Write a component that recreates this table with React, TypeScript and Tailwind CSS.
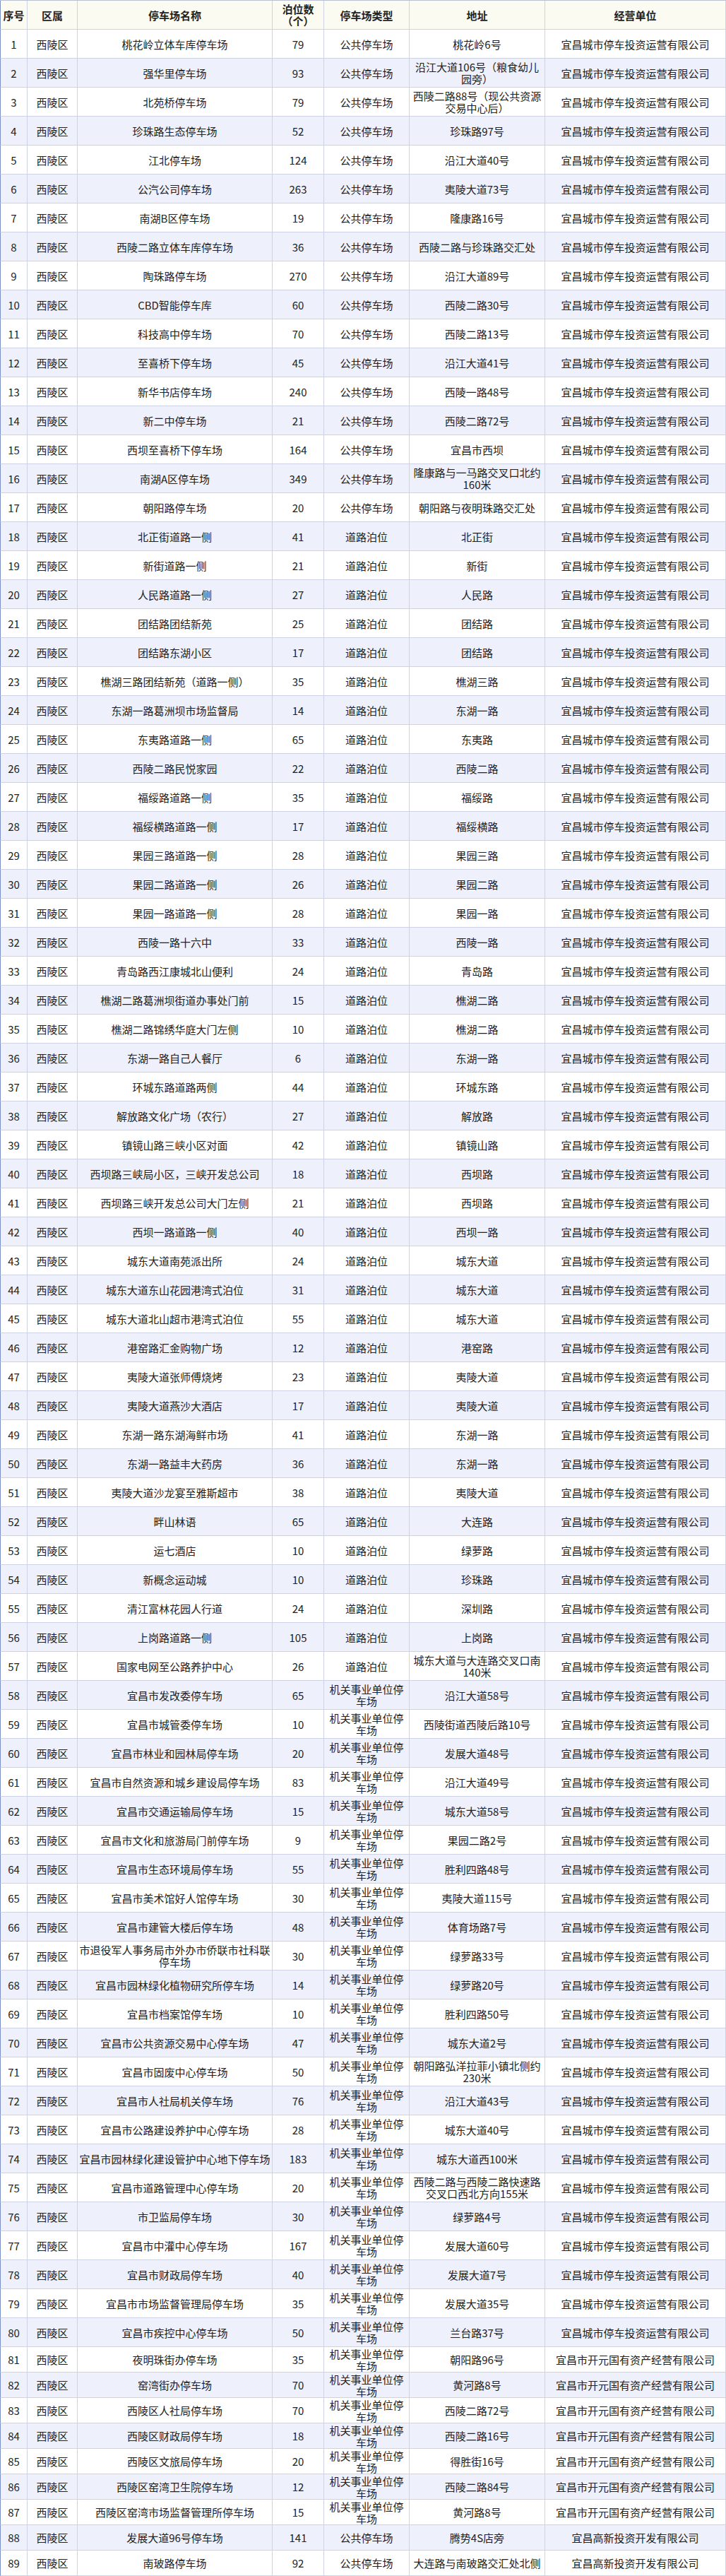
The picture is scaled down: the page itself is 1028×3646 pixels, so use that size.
import React from "react";

const P = "公共停车场";
const R = "道路泊位";
const J = "机关事业单位停车场";
const C1 = "宜昌城市停车投资运营有限公司";
const C2 = "宜昌市开元国有资产经营有限公司";
const C3 = "宜昌高新投资开发有限公司";

type Row = [string, string, string, string, string];

const rows: Row[] = [
  ["桃花岭立体车库停车场", "79", P, "桃花岭6号", C1],
  ["强华里停车场", "93", P, "沿江大道106号（粮食幼儿园旁）", C1],
  ["北苑桥停车场", "79", P, "西陵二路88号（现公共资源交易中心后）", C1],
  ["珍珠路生态停车场", "52", P, "珍珠路97号", C1],
  ["江北停车场", "124", P, "沿江大道40号", C1],
  ["公汽公司停车场", "263", P, "夷陵大道73号", C1],
  ["南湖B区停车场", "19", P, "隆康路16号", C1],
  ["西陵二路立体车库停车场", "36", P, "西陵二路与珍珠路交汇处", C1],
  ["陶珠路停车场", "270", P, "沿江大道89号", C1],
  ["CBD智能停车库", "60", P, "西陵二路30号", C1],
  ["科技高中停车场", "70", P, "西陵二路13号", C1],
  ["至喜桥下停车场", "45", P, "沿江大道41号", C1],
  ["新华书店停车场", "240", P, "西陵一路48号", C1],
  ["新二中停车场", "21", P, "西陵二路72号", C1],
  ["西坝至喜桥下停车场", "164", P, "宜昌市西坝", C1],
  ["南湖A区停车场", "349", P, "隆康路与一马路交叉口北约160米", C1],
  ["朝阳路停车场", "20", P, "朝阳路与夜明珠路交汇处", C1],
  ["北正街道路一侧", "41", R, "北正街", C1],
  ["新街道路一侧", "21", R, "新街", C1],
  ["人民路道路一侧", "27", R, "人民路", C1],
  ["团结路团结新苑", "25", R, "团结路", C1],
  ["团结路东湖小区", "17", R, "团结路", C1],
  ["樵湖三路团结新苑（道路一侧）", "35", R, "樵湖三路", C1],
  ["东湖一路葛洲坝市场监督局", "14", R, "东湖一路", C1],
  ["东夷路道路一侧", "65", R, "东夷路", C1],
  ["西陵二路民悦家园", "22", R, "西陵二路", C1],
  ["福绥路道路一侧", "35", R, "福绥路", C1],
  ["福绥横路道路一侧", "17", R, "福绥横路", C1],
  ["果园三路道路一侧", "28", R, "果园三路", C1],
  ["果园二路道路一侧", "26", R, "果园二路", C1],
  ["果园一路道路一侧", "28", R, "果园一路", C1],
  ["西陵一路十六中", "33", R, "西陵一路", C1],
  ["青岛路西江康城北山便利", "24", R, "青岛路", C1],
  ["樵湖二路葛洲坝街道办事处门前", "15", R, "樵湖二路", C1],
  ["樵湖二路锦绣华庭大门左侧", "10", R, "樵湖二路", C1],
  ["东湖一路自己人餐厅", "6", R, "东湖一路", C1],
  ["环城东路道路两侧", "44", R, "环城东路", C1],
  ["解放路文化广场（农行）", "27", R, "解放路", C1],
  ["镇镜山路三峡小区对面", "42", R, "镇镜山路", C1],
  ["西坝路三峡局小区，三峡开发总公司", "18", R, "西坝路", C1],
  ["西坝路三峡开发总公司大门左侧", "21", R, "西坝路", C1],
  ["西坝一路道路一侧", "40", R, "西坝一路", C1],
  ["城东大道南苑派出所", "24", R, "城东大道", C1],
  ["城东大道东山花园港湾式泊位", "31", R, "城东大道", C1],
  ["城东大道北山超市港湾式泊位", "55", R, "城东大道", C1],
  ["港窑路汇金购物广场", "12", R, "港窑路", C1],
  ["夷陵大道张师傅烧烤", "23", R, "夷陵大道", C1],
  ["夷陵大道燕沙大酒店", "17", R, "夷陵大道", C1],
  ["东湖一路东湖海鲜市场", "41", R, "东湖一路", C1],
  ["东湖一路益丰大药房", "36", R, "东湖一路", C1],
  ["夷陵大道沙龙宴至雅斯超市", "38", R, "夷陵大道", C1],
  ["畔山林语", "65", R, "大连路", C1],
  ["运七酒店", "10", R, "绿萝路", C1],
  ["新概念运动城", "10", R, "珍珠路", C1],
  ["清江富林花园人行道", "24", R, "深圳路", C1],
  ["上岗路道路一侧", "105", R, "上岗路", C1],
  ["国家电网至公路养护中心", "26", R, "城东大道与大连路交叉口南140米", C1],
  ["宜昌市发改委停车场", "65", J, "沿江大道58号", C1],
  ["宜昌市城管委停车场", "10", J, "西陵街道西陵后路10号", C1],
  ["宜昌市林业和园林局停车场", "20", J, "发展大道48号", C1],
  ["宜昌市自然资源和城乡建设局停车场", "83", J, "沿江大道49号", C1],
  ["宜昌市交通运输局停车场", "15", J, "城东大道58号", C1],
  ["宜昌市文化和旅游局门前停车场", "9", J, "果园二路2号", C1],
  ["宜昌市生态环境局停车场", "55", J, "胜利四路48号", C1],
  ["宜昌市美术馆好人馆停车场", "30", J, "夷陵大道115号", C1],
  ["宜昌市建管大楼后停车场", "48", J, "体育场路7号", C1],
  ["市退役军人事务局市外办市侨联市社科联停车场", "30", J, "绿萝路33号", C1],
  ["宜昌市园林绿化植物研究所停车场", "14", J, "绿萝路20号", C1],
  ["宜昌市档案馆停车场", "10", J, "胜利四路50号", C1],
  ["宜昌市公共资源交易中心停车场", "47", J, "城东大道2号", C1],
  ["宜昌市固废中心停车场", "50", J, "朝阳路弘洋拉菲小镇北侧约230米", C1],
  ["宜昌市人社局机关停车场", "76", J, "沿江大道43号", C1],
  ["宜昌市公路建设养护中心停车场", "28", J, "城东大道40号", C1],
  ["宜昌市园林绿化建设管护中心地下停车场", "183", J, "城东大道西100米", C1],
  ["宜昌市道路管理中心停车场", "20", J, "西陵二路与西陵二路快速路交叉口西北方向155米", C1],
  ["市卫监局停车场", "30", J, "绿萝路4号", C1],
  ["宜昌市中灌中心停车场", "167", J, "发展大道60号", C1],
  ["宜昌市财政局停车场", "40", J, "发展大道7号", C1],
  ["宜昌市市场监督管理局停车场", "35", J, "发展大道35号", C1],
  ["宜昌市疾控中心停车场", "50", J, "兰台路37号", C1],
  ["夜明珠街办停车场", "35", J, "朝阳路96号", C2],
  ["窑湾街办停车场", "70", J, "黄河路8号", C2],
  ["西陵区人社局停车场", "70", J, "西陵二路72号", C2],
  ["西陵区财政局停车场", "18", J, "西陵二路16号", C2],
  ["西陵区文旅局停车场", "20", J, "得胜街16号", C2],
  ["西陵区窑湾卫生院停车场", "12", J, "西陵二路84号", C2],
  ["西陵区窑湾市场监督管理所停车场", "15", J, "黄河路8号", C2],
  ["发展大道96号停车场", "141", P, "腾势4S店旁", C3],
  ["南玻路停车场", "92", P, "大连路与南玻路交汇处北侧", C3],
];

const cell =
  "flex items-center justify-center text-center px-[2px] border-r border-b border-[#cdd3e5] leading-[17px] break-all";

export default function App() {
  return (
    <div
      className="w-[1028px] bg-white text-[15px] text-[#222]"
      style={{ fontFamily: '"Noto Sans CJK SC", "Noto Sans", sans-serif' }}
    >
      <div className="grid grid-cols-[39px_71px_276px_73px_121px_192px_256px] h-[42px] bg-[#fbfbf2] font-bold border-t border-[#b8c0d6]">
        <div className={cell + " border-l border-l-[#7d90c6]"}>序号</div>
        <div className={cell}>区属</div>
        <div className={cell}>停车场名称</div>
        <div className={cell + " flex-col"}>
          <span>泊位数</span>
          <span>（个）</span>
        </div>
        <div className={cell}>停车场类型</div>
        <div className={cell}>地址</div>
        <div className={cell}>经营单位</div>
      </div>
      {rows.map((r, i) => {
        const n = i + 1;
        const even = n % 2 === 0;
        const h = n > 80 ? "h-[36px]" : "h-[41px]";
        return (
          <div
            key={n}
            className={
              "grid grid-cols-[39px_71px_276px_73px_121px_192px_256px] " +
              h +
              (even ? " bg-[#eef0fb]" : " bg-white")
            }
          >
            <div className={cell + " border-l border-l-[#7d90c6]"}>{n}</div>
            <div className={cell}>西陵区</div>
            <div className={cell}>{r[0]}</div>
            <div className={cell}>{r[1]}</div>
            <div className={cell}>{r[2]}</div>
            <div className={cell}>{r[3]}</div>
            <div className={cell}>{r[4]}</div>
          </div>
        );
      })}
    </div>
  );
}
